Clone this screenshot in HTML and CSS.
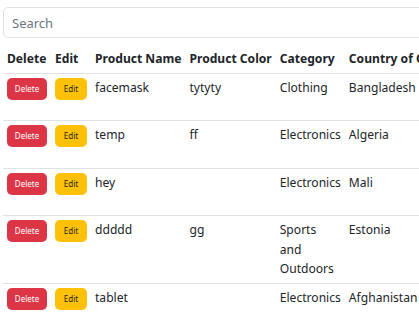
FILE: index.html
```html
<!DOCTYPE html>
<html lang="en">
<head>
<meta charset="utf-8">
<title>Products</title>
<link rel="stylesheet" href="styles.css">
</head>
<body>
<div class="page">
  <input class="search" type="text" placeholder="Search">
  <table class="products">
    <thead>
      <tr>
        <th>Delete</th>
        <th>Edit</th>
        <th>Product Name</th>
        <th>Product Color</th>
        <th class="cat">Category</th>
        <th>Country of Origin</th>
        <th>Description</th>
      </tr>
    </thead>
    <tbody>
      <tr>
        <td><button class="btn btn-delete">Delete</button></td>
        <td><button class="btn btn-edit">Edit</button></td>
        <td>facemask</td>
        <td>tytyty</td>
        <td class="cat">Clothing</td>
        <td>Bangladesh</td>
        <td></td>
      </tr>
      <tr>
        <td><button class="btn btn-delete">Delete</button></td>
        <td><button class="btn btn-edit">Edit</button></td>
        <td>temp</td>
        <td>ff</td>
        <td class="cat">Electronics</td>
        <td>Algeria</td>
        <td></td>
      </tr>
      <tr>
        <td><button class="btn btn-delete">Delete</button></td>
        <td><button class="btn btn-edit">Edit</button></td>
        <td>hey</td>
        <td></td>
        <td class="cat">Electronics</td>
        <td>Mali</td>
        <td></td>
      </tr>
      <tr>
        <td><button class="btn btn-delete">Delete</button></td>
        <td><button class="btn btn-edit">Edit</button></td>
        <td>ddddd</td>
        <td>gg</td>
        <td class="cat">Sports and Outdoors</td>
        <td>Estonia</td>
        <td></td>
      </tr>
      <tr>
        <td><button class="btn btn-delete">Delete</button></td>
        <td><button class="btn btn-edit">Edit</button></td>
        <td>tablet</td>
        <td></td>
        <td class="cat">Electronics</td>
        <td>Afghanistan</td>
        <td></td>
      </tr>
    </tbody>
  </table>
</div>
</body>
</html>
```

FILE: styles.css
```css
html, body {
  margin: 0;
  padding: 0;
  overflow: hidden;
  background: #fff;
}

body {
  font-family: "Noto Sans", "Open Sans", sans-serif;
  font-size: 12.1px;
  line-height: 19.5px;
  color: #212529;
}

.page {
  display: inline-flex;
  flex-direction: column;
  align-items: stretch;
  gap: 7px;
  padding: 7px 0 0 3px;
  width: max-content;
}

.search {
  box-sizing: border-box;
  height: 31px;
  padding: 0 8px;
  border: 1px solid #dee2e6;
  border-radius: 5px;
  font-family: inherit;
  font-size: 13px;
  color: #212529;
  background: #fff;
}

.search::placeholder {
  color: #6c757d;
}

.products {
  border-collapse: collapse;
}

.products th,
.products td {
  padding: 4px;
  text-align: left;
  vertical-align: top;
  white-space: nowrap;
  border-bottom: 1px solid #dee2e6;
}

.products th {
  font-weight: 700;
}

.products tbody tr {
  height: 47.5px;
}

.products .cat {
  white-space: normal;
  width: 1px;
}

.btn {
  display: block;
  box-sizing: border-box;
  height: 22px;
  padding: 0;
  border: none;
  border-radius: 5px;
  font-family: inherit;
  font-size: 8px;
  line-height: 22px;
  text-align: center;
}

.btn-delete {
  width: 40px;
  background: #dc3545;
  color: #fff;
}

.btn-edit {
  width: 32px;
  background: #ffc107;
  color: #212529;
}
```
